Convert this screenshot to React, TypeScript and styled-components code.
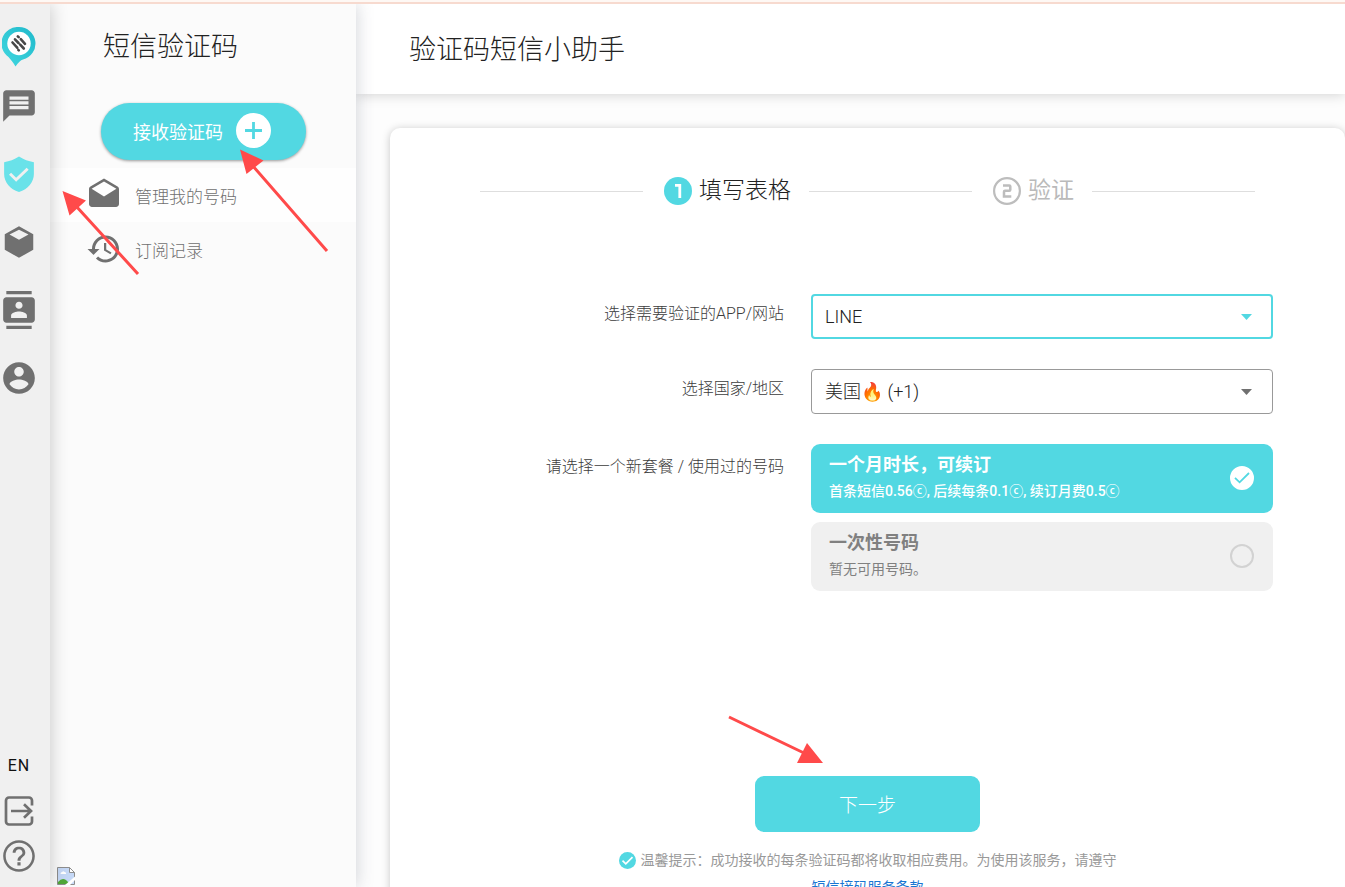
import React, { useState } from 'react';
import styled, { createGlobalStyle } from 'styled-components';

const teal = '#52d8e2';
const iconGrey = '#707070';

const GlobalStyle = createGlobalStyle`
  *, *::before, *::after { box-sizing: border-box; }
  body {
    margin: 0;
    color: #222;
    font-family: Roboto, "Noto Sans CJK SC", sans-serif;
    font-weight: 300;
    font-size: 16px;
  }
  button, select { font: inherit; }
`;

const Page = styled.div`
  position: relative;
  height: 100vh;
  display: flex;
  flex-direction: column;
  overflow: hidden;
  background: #fdfdfd;
`;

const TopStrip = styled.div`
  flex: none;
  height: 4px;
  background: #fef8f4;
  border-bottom: 2px solid #f7dacf;
`;

const Shell = styled.div`
  flex: 1;
  min-height: 0;
  display: flex;
`;

const Rail = styled.nav`
  position: relative;
  z-index: 3;
  flex: none;
  width: 50px;
  padding: 23px 12px 12px 0;
  display: flex;
  flex-direction: column;
  align-items: center;
  background: #f0f0f0;
  box-shadow: 1px 0 18px rgba(0, 0, 0, 0.2);
  clip-path: inset(0 -30px 0 0);
`;

const RailLogo = styled.a`
  height: 45px;
  svg { display: block; }
`;

const RailButton = styled.button<{ $active?: boolean }>`
  width: 38px;
  height: 68px;
  padding: 0;
  border: 0;
  background: none;
  display: flex;
  align-items: center;
  justify-content: center;
  cursor: pointer;
  color: ${(p) => (p.$active ? '#69e2e9' : iconGrey)};
`;

const RailFooter = styled.div`
  margin-top: auto;
  display: flex;
  flex-direction: column;
  align-items: center;
  gap: 7px;
`;

const FooterButton = styled.button`
  padding: 0;
  border: 0;
  background: none;
  color: ${iconGrey};
  cursor: pointer;
  svg { display: block; }
`;

const LangButton = styled(FooterButton)`
  color: #111;
  font-size: 16px;
  font-weight: 400;
  line-height: 20px;
  letter-spacing: 1px;
  margin-bottom: 9px;
`;

const Panel = styled.aside`
  position: relative;
  z-index: 2;
  flex: none;
  width: 306px;
  display: flex;
  flex-direction: column;
  background: #fbfbfb;
  box-shadow: 1px 0 16px rgba(60, 70, 90, 0.22);
  clip-path: inset(0 -30px 0 0);
`;

const PanelTitle = styled.h2`
  margin: 23px 0 0 53px;
  font-size: 27px;
  line-height: 40px;
  font-weight: 300;
`;

const ReceiveButton = styled.button`
  align-self: flex-start;
  width: 205px;
  height: 57px;
  margin: 36px 0 8px 51px;
  padding: 0 35px 2px 32px;
  display: flex;
  align-items: center;
  justify-content: space-between;
  border: 0;
  border-radius: 29px;
  color: #fff;
  background: ${teal};
  font-size: 18px;
  font-weight: 400;
  white-space: nowrap;
  box-shadow: 0 1px 3px rgba(0, 0, 0, 0.4);
  cursor: pointer;
`;

const MenuItem = styled.a<{ $active?: boolean }>`
  height: 54px;
  padding-left: 36px;
  display: flex;
  align-items: center;
  gap: 13px;
  color: #707070;
  background: ${(p) => (p.$active ? '#fefefe' : 'transparent')};
  font-size: 17px;
  text-decoration: none;
  svg { color: ${iconGrey}; }
`;

const BrokenImage = styled.div`
  margin: auto 0 2px 7px;
  svg { display: block; }
`;

const Main = styled.main`
  flex: 1;
  min-width: 0;
  display: flex;
  flex-direction: column;
  overflow: hidden;
`;

const Header = styled.header`
  flex: none;
  height: 90px;
  padding: 2px 53px 0;
  display: flex;
  align-items: center;
  background: #fff;
  box-shadow: 0 1px 12px rgba(0, 0, 0, 0.17);
`;

const HeaderTitle = styled.h1`
  margin: 0;
  font-size: 27px;
  font-weight: 300;
  line-height: 40px;
`;

const Card = styled.section`
  flex: 1 0 auto;
  margin: 34px 0 0 34px;
  padding: 46px 72px 40px;
  display: flex;
  flex-direction: column;
  align-items: center;
  background: #fff;
  border-radius: 10px;
  box-shadow: 0 1px 8px rgba(0, 0, 0, 0.22);
`;

const Steps = styled.ol`
  width: 100%;
  max-width: 775px;
  height: 34px;
  flex: none;
  margin: 0;
  padding: 0;
  list-style: none;
  display: flex;
  align-items: center;
`;

const StepLine = styled.li`
  flex: 1;
  height: 1px;
  background: #dedede;
`;

const Step = styled.li<{ $active?: boolean }>`
  padding: 0 18px 0 21px;
  display: flex;
  align-items: center;
  gap: 7px;
  font-size: 23px;
  line-height: 34px;
  font-weight: ${(p) => (p.$active ? 300 : 400)};
  color: ${(p) => (p.$active ? '#222' : '#bababa')};
`;

const Form = styled.form`
  flex: none;
  width: 100%;
  margin-top: 86px;
  display: flex;
  flex-direction: column;
  align-items: center;
`;

const Fields = styled.div`
  align-self: stretch;
  display: grid;
  grid-template-columns: minmax(0, 1fr) minmax(0, 462px);
  column-gap: 27px;
  row-gap: 30px;
`;

const FieldLabel = styled.label`
  padding-top: 10px;
  line-height: 20px;
  text-align: right;
  color: #3c3c3c;
`;

const GroupLabel = styled.span`
  padding-top: 13px;
  line-height: 20px;
  text-align: right;
  color: #3c3c3c;
`;

const SelectBox = styled.div<{ $focused?: boolean }>`
  position: relative;
  svg {
    position: absolute;
    right: 21px;
    top: 20px;
    pointer-events: none;
    color: ${(p) => (p.$focused ? teal : '#707070')};
  }
`;

const Select = styled.select<{ $focused?: boolean }>`
  width: 100%;
  height: 45px;
  padding: 0 ${(p) => (p.$focused ? '12px' : '13px')};
  appearance: none;
  border: ${(p) => (p.$focused ? `2px solid ${teal}` : '1px solid #999')};
  border-radius: 4px;
  outline: none;
  background: #fff;
  color: #222;
  font-size: 18px;
`;

const Options = styled.div`
  display: flex;
  flex-direction: column;
  gap: 9px;
`;

const Option = styled.label<{ $selected: boolean }>`
  position: relative;
  height: 69px;
  padding: 0 19px 2px 18px;
  display: flex;
  align-items: center;
  justify-content: space-between;
  border-radius: 9px;
  background: ${(p) => (p.$selected ? teal : '#f0f0f0')};
  color: ${(p) => (p.$selected ? '#fff' : '#808080')};
`;

const OptionText = styled.span`
  display: flex;
  flex-direction: column;
`;

const OptionTitle = styled.strong`
  font-size: 18px;
  line-height: 26px;
  font-weight: 700;
`;

const OptionNote = styled.span<{ $selected: boolean }>`
  font-size: 14px;
  line-height: 26px;
  font-weight: ${(p) => (p.$selected ? 500 : 400)};
`;

const Radio = styled.input`
  flex: none;
  appearance: none;
  width: 24px;
  height: 24px;
  margin: 0;
  border: 2px solid #d2d2d2;
  border-radius: 50%;
  &:checked {
    border-color: #fff;
    background: #fff;
  }
`;

const RadioTick = styled.svg`
  position: absolute;
  right: 19px;
  top: 22px;
  pointer-events: none;
`;

const NextButton = styled.button`
  width: 225px;
  height: 56px;
  margin-top: 185px;
  padding-bottom: 3px;
  border: 0;
  border-radius: 9px;
  background: ${teal};
  color: #fff;
  font-size: 19px;
  cursor: pointer;
`;

const Tip = styled.p`
  margin: 15px 0 0;
  display: flex;
  align-items: center;
  gap: 5px;
  color: #999;
  font-size: 14px;
  line-height: 27px;
  font-weight: 400;
`;

const TermsLink = styled.a`
  color: #1976d2;
  font-size: 14px;
  line-height: 27px;
  font-weight: 400;
  text-decoration: none;
`;

const Arrows = styled.svg`
  position: absolute;
  left: 0;
  top: 0;
  z-index: 10;
  pointer-events: none;
`;

const Icon = ({ d, size = 38 }: { d: string; size?: number }) => (
  <svg width={size} height={size} viewBox="0 0 24 24" fill="currentColor" fillRule="evenodd" aria-hidden="true">
    <path d={d} />
  </svg>
);

const icons = {
  message: 'M20 2H4c-1.100 0-1.990.900-1.990 2L2 22l4-4h14c1.100 0 2-.900 2-2V4c0-1.100-.900-2-2-2zm-2 12H6v-2h12v2zm0-3H6V9h12v2zm0-3H6V6h12v2z',
  shield: 'M12 1C9 3 6 4 2.600 4.500V12c0 5 3.700 9.700 9.400 11.400 5.700-1.700 9.400-6.400 9.400-11.400V4.500C18 4 15 3 12 1zM10.200 16.900L5.700 12.500l1.300-1.300 3.200 3.100L16.800 8l1.300 1.300z',
  box: 'M12 2L3 7.100v9.800L12 22l9-5.100V7.100zM12 4.300l6 3-6 3.200-6-3.200z',
  contacts: 'M20 0H4v2h16V0zM4 24h16v-2H4v2zM20 4H4c-1.100 0-2 .900-2 2v12c0 1.100.900 2 2 2h16c1.100 0 2-.900 2-2V6c0-1.100-.900-2-2-2zm-8 2.750c1.240 0 2.250 1.010 2.250 2.250s-1.010 2.250-2.250 2.250S9.750 10.240 9.750 9 10.760 6.750 12 6.750zM17 17H7v-1.500c0-1.670 3.330-2.500 5-2.500s5 .830 5 2.500V17z',
  account: 'M12 2C6.480 2 2 6.480 2 12s4.480 10 10 10 10-4.480 10-10S17.520 2 12 2zm0 3c1.660 0 3 1.340 3 3s-1.340 3-3 3-3-1.340-3-3 1.340-3 3-3zm0 14.200c-2.500 0-4.710-1.280-6-3.220.030-1.990 4-3.080 6-3.080 1.990 0 5.970 1.090 6 3.080-1.290 1.940-3.500 3.220-6 3.220z',
  help: 'M11 18h2v-2h-2v2zm1-16C6.480 2 2 6.480 2 12s4.480 10 10 10 10-4.480 10-10S17.520 2 12 2zm0 18.400c-4.630 0-8.400-3.770-8.400-8.400S7.370 3.600 12 3.600s8.400 3.770 8.400 8.400-3.770 8.400-8.400 8.400zM12 6c-2.210 0-4 1.790-4 4h1.800c0-1.210.990-2.200 2.200-2.200s2.200.990 2.200 2.200c0 2-3.150 1.750-3.150 5h1.900c0-2.250 3.050-2.500 3.050-5 0-2.210-1.790-4-4-4z',
  drafts: 'M21.990 8c0-.720-.370-1.350-.940-1.700L12 1 2.950 6.300C2.380 6.650 2 7.280 2 8v10c0 1.100.900 2 2 2h16c1.100 0 2-.900 2-2l-.010-10zM12 13L3.740 7.840 12 3l8.260 4.840L12 13z',
  history: 'M13 3c-4.970 0-9 4.030-9 9H1l3.890 3.890.070.140L9 12H6c0-3.870 3.130-7 7-7s7 3.130 7 7-3.130 7-7 7c-1.930 0-3.680-.790-4.940-2.060l-1.420 1.420C8.270 19.990 10.510 21 13 21c4.970 0 9-4.030 9-9s-4.030-9-9-9zm-1 5v5l4.280 2.540.720-1.210-3.500-2.080V8H12z',
};

const Logo = () => (
  <svg width="34" height="40" viewBox="0 0 34 40" aria-hidden="true">
    <defs>
      <linearGradient id="pin" x1="1" y1="0" x2="0" y2="1">
        <stop offset="0" stopColor="#1fb9cb" />
        <stop offset="1" stopColor="#43d8e0" />
      </linearGradient>
    </defs>
    <path fill="url(#pin)" d="M17 0a16.500 16.500 0 0 1 4 32.500c-2.500.700-4.500 3-7.500 7-2-3.500-4-6-7-9.500A16.500 16.500 0 0 1 17 0z" />
    <circle cx="17" cy="16.500" r="11.700" fill="#fff" />
    <g stroke="#484848" strokeWidth="2.600" strokeLinecap="round">
      <path d="M15.800 9.300l.9.900M18.800 12.200l4.200 4.600M13 12.300l3.500 3.700M10.500 15.500l4.700 5.200M18.200 17.600l3.600 3.900M16.300 22.800l.5.500" />
    </g>
  </svg>
);

const LogoutIcon = () => (
  <svg width="38" height="38" viewBox="0 0 38 38" fill="none" stroke="currentColor" strokeWidth="2.700" aria-hidden="true">
    <path d="M32 13.500V8.500a3 3 0 0 0-3-3H9a3 3 0 0 0-3 3v21a3 3 0 0 0 3 3h20a3 3 0 0 0 3-3v-5" />
    <path d="M11 19h20M24 12.300l7 6.700-7 6.700" />
  </svg>
);

const PlusIcon = () => (
  <svg width="35" height="35" viewBox="0 0 35 35" aria-hidden="true">
    <circle cx="17.500" cy="17.500" r="17.500" fill="#fff" />
    <path d="M17.500 9v17M9 17.500h17" stroke={teal} strokeWidth="2.800" />
  </svg>
);

const StepOne = () => (
  <svg width="28" height="28" viewBox="0 0 28 28" role="img" aria-label="1">
    <circle cx="14" cy="14" r="14" fill={teal} />
    <path d="M11 8.300h4.800V21" fill="none" stroke="#fff" strokeWidth="2.800" />
  </svg>
);

const StepTwo = () => (
  <svg width="28" height="28" viewBox="0 0 28 28" role="img" aria-label="2" fill="none" stroke="#bdbdbd">
    <circle cx="14" cy="14" r="12.900" strokeWidth="2.200" />
    <path d="M10 8.500h6.300q1 0 1 1v3.200q0 1-1 1h-4.300q-1 0-1 1v4.800h7.300" strokeWidth="2.500" />
  </svg>
);

const Caret = () => (
  <svg width="11" height="6" viewBox="0 0 11 6" fill="currentColor" aria-hidden="true">
    <path d="M0 0h11L5.500 6z" />
  </svg>
);

const BrokenGlyph = () => (
  <svg width="18" height="18" viewBox="0 0 18 18" aria-hidden="true">
    <path d="M.5.500h12l5 5v12H.5z" fill="#c5d8f6" stroke="#8e8e8e" />
    <path d="M12.500.500v5h5z" fill="#fff" stroke="#8e8e8e" />
    <path d="M3.500 7q0-2 1.700-2 .9-1.700 2.400 0 1.600 0 1.600 2z" fill="#fff" />
    <path d="M1 17v-2q4-5 8-2l4 4z" fill="#51a838" />
    <path d="M8 18L18 9.500v3.500l-5 5z" fill="#fff" />
  </svg>
);

const plans = [
  { id: 'month', title: '一个月时长，可续订', note: '首条短信0.56ⓒ, 后续每条0.1ⓒ, 续订月费0.5ⓒ' },
  { id: 'once', title: '一次性号码', note: '暂无可用号码。' },
];

export default function App() {
  const [plan, setPlan] = useState('month');

  return (
    <Page>
      <GlobalStyle />
      <TopStrip />
      <Shell>
        <Rail>
          <RailLogo href="#" aria-label="首页"><Logo /></RailLogo>
          <RailButton aria-label="短信"><Icon d={icons.message} /></RailButton>
          <RailButton $active aria-label="验证码"><Icon d={icons.shield} /></RailButton>
          <RailButton aria-label="套餐"><Icon d={icons.box} /></RailButton>
          <RailButton aria-label="联系人"><Icon d={icons.contacts} /></RailButton>
          <RailButton aria-label="账户"><Icon d={icons.account} /></RailButton>
          <RailFooter>
            <LangButton>EN</LangButton>
            <FooterButton aria-label="退出"><LogoutIcon /></FooterButton>
            <FooterButton aria-label="帮助"><Icon d={icons.help} /></FooterButton>
          </RailFooter>
        </Rail>

        <Panel>
          <PanelTitle>短信验证码</PanelTitle>
          <ReceiveButton>接收验证码<PlusIcon /></ReceiveButton>
          <MenuItem href="#" $active><Icon d={icons.drafts} size={36} />管理我的号码</MenuItem>
          <MenuItem href="#"><Icon d={icons.history} size={36} />订阅记录</MenuItem>
          <BrokenImage><BrokenGlyph /></BrokenImage>
        </Panel>

        <Main>
          <Header><HeaderTitle>验证码短信小助手</HeaderTitle></Header>
          <Card>
            <Steps>
              <StepLine aria-hidden="true" />
              <Step $active><StepOne />填写表格</Step>
              <StepLine aria-hidden="true" />
              <Step><StepTwo />验证</Step>
              <StepLine aria-hidden="true" />
            </Steps>

            <Form onSubmit={(e) => e.preventDefault()}>
              <Fields>
                <FieldLabel htmlFor="app">选择需要验证的APP/网站</FieldLabel>
                <SelectBox $focused>
                  <Select id="app" $focused><option>LINE</option></Select>
                  <Caret />
                </SelectBox>

                <FieldLabel htmlFor="country">选择国家/地区</FieldLabel>
                <SelectBox>
                  <Select id="country"><option>美国🔥 (+1)</option></Select>
                  <Caret />
                </SelectBox>

                <GroupLabel id="plan-label">请选择一个新套餐 / 使用过的号码</GroupLabel>
                <Options role="radiogroup" aria-labelledby="plan-label">
                  {plans.map((p) => (
                    <Option key={p.id} $selected={plan === p.id}>
                      <OptionText>
                        <OptionTitle>{p.title}</OptionTitle>
                        <OptionNote $selected={plan === p.id}>{p.note}</OptionNote>
                      </OptionText>
                      <Radio type="radio" name="plan" checked={plan === p.id} onChange={() => setPlan(p.id)} />
                      {plan === p.id && (
                        <RadioTick width="24" height="24" viewBox="0 0 24 24" fill="none" aria-hidden="true">
                          <path d="M5 11.800l4.600 4.500L19 7" stroke={teal} strokeWidth="1.800" />
                        </RadioTick>
                      )}
                    </Option>
                  ))}
                </Options>
              </Fields>

              <NextButton type="submit">下一步</NextButton>
              <Tip>
                <svg width="17" height="17" viewBox="0 0 17 17" fill="none" aria-hidden="true">
                  <circle cx="8.500" cy="8.500" r="8.500" fill={teal} />
                  <path d="M3.500 8.700l3.300 3.200L13.500 5.200" stroke="#fff" strokeWidth="1.700" />
                </svg>
                温馨提示：成功接收的每条验证码都将收取相应费用。为使用该服务，请遵守
              </Tip>
              <TermsLink href="#">短信接码服务条款</TermsLink>
            </Form>
          </Card>
        </Main>
      </Shell>

      <Arrows width="830" height="780" viewBox="0 0 830 780" fill="#ff4a4a" stroke="#ff4a4a" aria-hidden="true">
        <path d="M327 251L252 165M138 274L76 206M729 717L804 753" strokeWidth="3" />
        <path d="M240 149.500L263.500 160.500 246.500 174zM62.500 191L86 200.500 69.500 215.500zM823 763L807 743 797 763z" stroke="none" />
      </Arrows>
    </Page>
  );
}
